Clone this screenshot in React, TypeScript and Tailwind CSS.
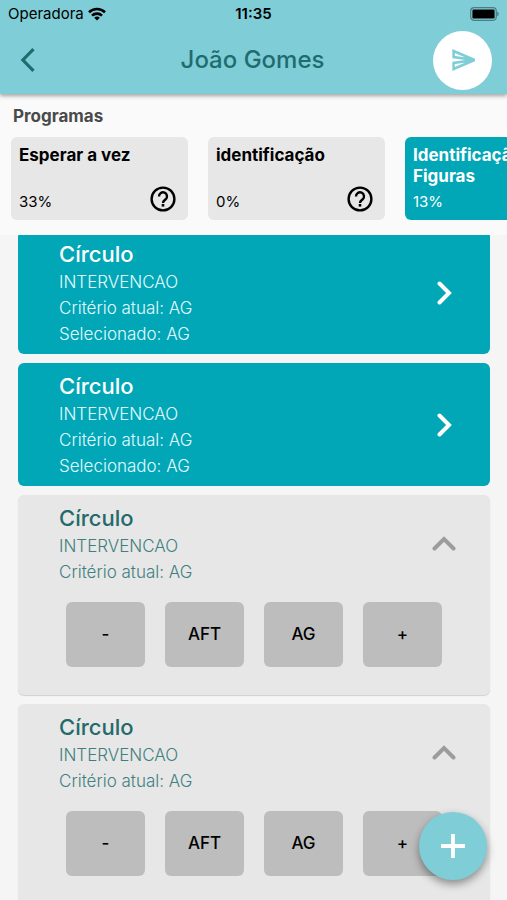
import React from 'react';

type Program = { name: string; percent: string; active?: boolean };

const programs: Program[] = [
  { name: 'Esperar a vez', percent: '33%' },
  { name: 'identificação', percent: '0%' },
  { name: 'Identificação Figuras', percent: '13%', active: true },
];

type Target = { id: number; title: string; phase: string; criterion: string; selected?: string };

const targets: Target[] = [
  { id: 1, title: 'Círculo', phase: 'INTERVENCAO', criterion: 'AG', selected: 'AG' },
  { id: 2, title: 'Círculo', phase: 'INTERVENCAO', criterion: 'AG', selected: 'AG' },
  { id: 3, title: 'Círculo', phase: 'INTERVENCAO', criterion: 'AG' },
  { id: 4, title: 'Círculo', phase: 'INTERVENCAO', criterion: 'AG' },
];

const options = ['-', 'AFT', 'AG', '+'];

function StatusBar() {
  return (
    <div className="grid h-7 grid-cols-3 items-center pl-2 pr-2 text-[15px] leading-5 text-black">
      <div className="flex items-center gap-1">
        <span>Operadora</span>
        <svg className="h-[14px] w-[18px]" viewBox="0 0 18 14" fill="none" stroke="currentColor" strokeWidth="2.6">
          <path d="M1 5.2a11.6 11.6 0 0 1 16 0" />
          <path d="M4 8.6a7.2 7.2 0 0 1 10 0" />
          <path d="M9 13.6 6.2 10.8a4 4 0 0 1 5.6 0z" fill="currentColor" stroke="none" />
        </svg>
      </div>
      <span className="text-center font-semibold">11:35</span>
      <svg className="h-[14px] w-[30px] justify-self-end" viewBox="0 0 30 14">
        <rect x="1.7" y="0.7" width="25.6" height="12.6" rx="3.5" fill="none" stroke="#4d7d82" strokeWidth="1.2" />
        <rect x="3.4" y="2.4" width="22.2" height="9.2" rx="1.4" />
        <path d="M28.2 4.8c2 .6 2 3.8 0 4.4z" fill="#4d7d82" />
      </svg>
    </div>
  );
}

function Header() {
  return (
    <header className="relative z-10 shrink-0 bg-[#7fcdd6] shadow-[0_2px_4px_rgba(0,0,0,0.35)]">
      <StatusBar />
      <div className="grid h-[66px] grid-cols-[60px_1fr_60px] items-center pl-3 pr-[14px] pb-0.5">
        <button aria-label="Voltar" className="flex h-10 w-8 items-center justify-center text-[#1f6c70]">
          <svg className="h-6 w-4" viewBox="0 0 16 24" fill="none" stroke="currentColor" strokeWidth="3.2">
            <path d="M13.5 1.2 2.9 12l10.6 10.8" />
          </svg>
        </button>
        <h1 className="text-center text-2xl font-medium text-[#1f6c70]">João Gomes</h1>
        <button aria-label="Enviar" className="flex size-[59px] items-center justify-center rounded-full bg-white text-[#7fcdd6]">
          <svg className="ml-1 h-[22px] w-[26px]" viewBox="0 0 26 22" fill="none" stroke="currentColor" strokeWidth="2.5">
            <path d="M1.6 2 22.5 11 1.6 8.1z" />
            <path d="M1.6 20 22.5 11 1.6 13.9z" />
          </svg>
        </button>
      </div>
    </header>
  );
}

function ProgramCard({ program }: { program: Program }) {
  const colors = program.active ? 'bg-[#01a6b7] text-white' : 'bg-[#e7e7e7] text-black';

  return (
    <button className={`flex h-[83px] w-[177px] shrink-0 flex-col justify-between rounded-md px-2 py-2 text-left ${colors}`}>
      <span className="text-[17px] leading-[21px] font-bold">{program.name}</span>
      <span className="flex w-full items-end justify-between">
        <span className="text-[15px] leading-5">{program.percent}</span>
        {!program.active && (
          <svg className="mr-1 size-[26px]" viewBox="0 0 26 26" fill="none" stroke="currentColor" strokeWidth="2.4">
            <circle cx="13" cy="13" r="11.4" />
            <path d="M9 10.4a4 4 0 1 1 6.7 2.9c-1.5 1.2-2.7 1.8-2.7 3.6" />
            <path d="M13 18v2.6" strokeWidth="2.6" />
          </svg>
        )}
      </span>
    </button>
  );
}

function Chevron({ up }: { up?: boolean }) {
  return (
    <svg
      className={up ? 'h-6 w-6 text-[#9c9c9c]' : 'h-6 w-6 text-white'}
      viewBox="0 0 24 24"
      fill="none"
      stroke="currentColor"
      strokeWidth="4"
      strokeLinecap="round"
    >
      <path d={up ? 'M2.5 16.5 12 7l9.5 9.5' : 'M7.5 2.5 17 12l-9.5 9.5'} />
    </svg>
  );
}

function TargetCard({ target }: { target: Target }) {
  const done = Boolean(target.selected);

  return (
    <li className={`rounded-md pt-2 pl-[41px] pr-[34px] ${done ? 'bg-[#01a6b7] pb-[7px] text-white' : 'bg-[#e7e7e7] pb-7 text-[#24696b] shadow-[0_1px_1px_rgba(0,0,0,0.15)]'}`}>
      <div className="flex items-center justify-between">
        <div>
          <h2 className="text-[22px] leading-[30px] font-medium">{target.title}</h2>
          <div className={`text-[17px] leading-[26px] font-light ${done ? 'text-[#e3fbfd]' : 'text-[#3f7f80]'}`}>
            <p>{target.phase}</p>
            <p>Critério atual: {target.criterion}</p>
            {target.selected && <p>Selecionado: {target.selected}</p>}
          </div>
        </div>
        <button aria-label={done ? 'Abrir' : 'Recolher'}>
          <Chevron up={!done} />
        </button>
      </div>
      {!done && (
        <div className="mt-[17px] ml-[7px] mr-[14px] grid grid-cols-4 gap-5">
          {options.map((option) => (
            <button key={option} className="h-[65px] rounded-md bg-[#bdbdbd] text-[17px] font-medium text-black">
              {option}
            </button>
          ))}
        </div>
      )}
    </li>
  );
}

export default function App() {
  return (
    <div className="relative flex h-screen flex-col overflow-hidden bg-[#f5f5f5] font-['Inter',sans-serif]">
      <Header />
      <section className="shrink-0 bg-[#fafafa] pt-[9px] pb-[15px]">
        <h2 className="pl-[13px] text-[17px] leading-[26px] font-bold text-[#4a4a4a]">Programas</h2>
        <div className="mt-2 flex gap-5 overflow-hidden pl-[11px]">
          {programs.map((program) => (
            <ProgramCard key={program.name} program={program} />
          ))}
        </div>
      </section>
      <main className="min-h-0 flex-1 overflow-hidden">
        {/* list sits slightly scrolled under the program strip */}
        <ul className="-mt-1 flex flex-col gap-[9px] pl-[18px] pr-[17px]">
          {targets.map((target) => (
            <TargetCard key={target.id} target={target} />
          ))}
        </ul>
      </main>
      <button
        aria-label="Adicionar"
        className="absolute right-5 bottom-5 flex size-[68px] items-center justify-center rounded-full bg-[#7fcdd6] text-white shadow-[0_4px_8px_rgba(0,0,0,0.4)]"
      >
        <svg className="size-6" viewBox="0 0 24 24" fill="none" stroke="currentColor" strokeWidth="3.8">
          <path d="M12 0v24M0 12h24" />
        </svg>
      </button>
    </div>
  );
}
